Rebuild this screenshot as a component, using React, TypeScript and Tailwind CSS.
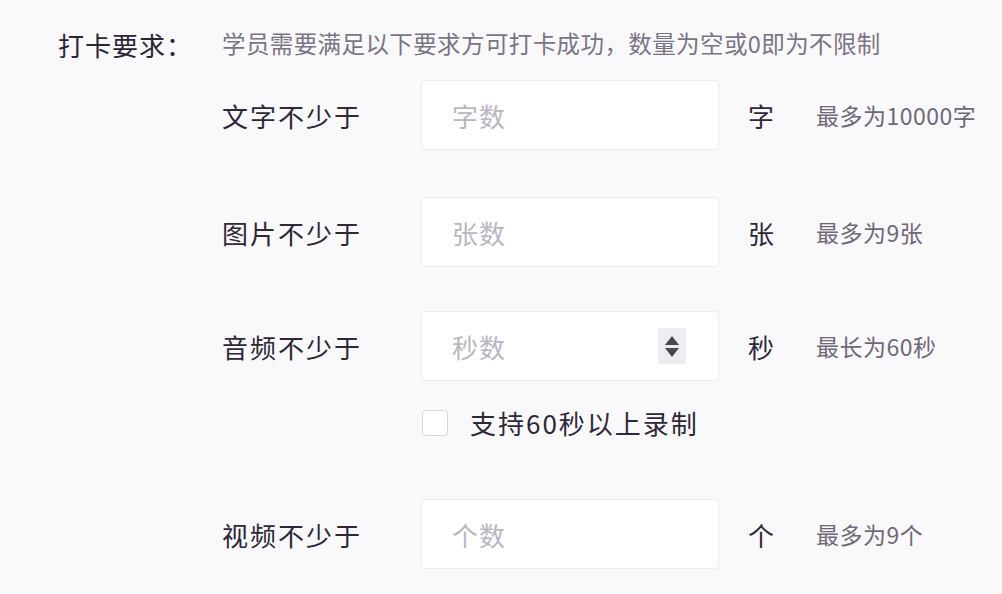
import React from 'react'

const font = { fontFamily: '"Noto Sans CJK SC", "Noto Sans", sans-serif' }

type Row = {
  label: string
  placeholder: string
  unit: string
  hint: string
  stepper?: boolean
  mt: string
}

const rows: Row[] = [
  { label: '文字不少于', placeholder: '字数', unit: '字', hint: '最多为10000字', mt: 'mt-[20px]' },
  { label: '图片不少于', placeholder: '张数', unit: '张', hint: '最多为9张', mt: 'mt-[47px]' },
  { label: '音频不少于', placeholder: '秒数', unit: '秒', hint: '最长为60秒', stepper: true, mt: 'mt-[44px]' },
]

const Stepper = () => (
  <div className="ml-auto mr-[32px] flex h-[36px] w-[28px] flex-col items-center justify-center gap-[3px] bg-[#ececf1]">
    <svg width="14" height="9" viewBox="0 0 14 9">
      <path d="M7 0 L14 9 L0 9 Z" fill="#4a4552" />
    </svg>
    <svg width="14" height="9" viewBox="0 0 14 9">
      <path d="M0 0 L14 0 L7 9 Z" fill="#4a4552" />
    </svg>
  </div>
)

const FieldRow = ({ row }: { row: Row }) => (
  <div className={`flex h-[70px] items-center ${row.mt}`}>
    <div className="w-[199px] text-[26px] tracking-[2px] text-[#2e2838]">{row.label}</div>
    <div className="flex h-[70px] w-[298px] items-center rounded-[4px] border border-[#ebebf0] bg-white pl-[30px]">
      <span className="text-[26px] tracking-[1px] text-[#b9b6c1]">{row.placeholder}</span>
      {row.stepper && <Stepper />}
    </div>
    <div className="w-[97px] pl-[29px] text-[26px] text-[#2e2838]">{row.unit}</div>
    <div className="text-[23px] tracking-[0.5px] text-[#6f6879]">{row.hint}</div>
  </div>
)

export default function App() {
  return (
    <div className="h-[594px] w-[1002px] overflow-hidden bg-[#f9f9fb] pt-[28px]" style={font}>
      <div className="flex h-[32px] items-center pl-[58px]">
        <div className="w-[164px] text-[26px] tracking-[1px] text-[#2b2535]">打卡要求：</div>
        <div className="text-[23.5px] tracking-[0.4px] text-[#7a7485]">
          学员需要满足以下要求方可打卡成功，数量为空或0即为不限制
        </div>
      </div>

      <div className="pl-[222px]">
        {rows.map((r) => (
          <FieldRow key={r.label} row={r} />
        ))}

        <div className="mt-[29px] flex h-[26px] items-center pl-[200px]">
          <div className="h-[26px] w-[26px] rounded-[3px] border border-[#d8d7df] bg-white" />
          <span className="ml-[22px] text-[26px] leading-[26px] tracking-[2px] text-[#2e2838]">
            支持60秒以上录制
          </span>
        </div>

        <div className="mt-[63px] flex h-[70px] items-center">
          <div className="w-[199px] text-[26px] tracking-[2px] text-[#2e2838]">视频不少于</div>
          <div className="flex h-[70px] w-[298px] items-center rounded-[4px] border border-[#ebebf0] bg-white pl-[30px]">
            <span className="text-[26px] tracking-[1px] text-[#b9b6c1]">个数</span>
          </div>
          <div className="w-[97px] pl-[29px] text-[26px] text-[#2e2838]">个</div>
          <div className="text-[23px] tracking-[0.5px] text-[#6f6879]">最多为9个</div>
        </div>
      </div>
    </div>
  )
}
